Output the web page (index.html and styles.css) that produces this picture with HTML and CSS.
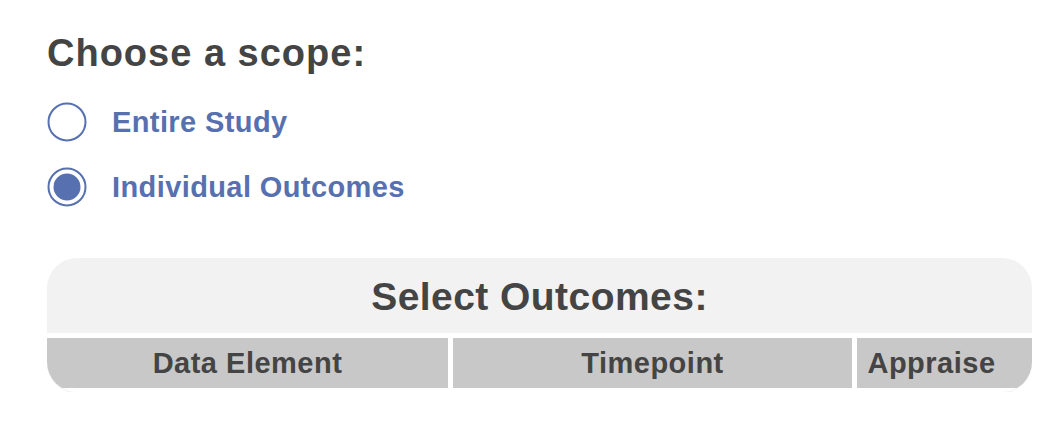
FILE: index.html
```html
<!DOCTYPE html>
<html>
<head>
<meta charset="utf-8">
<link rel="stylesheet" href="styles.css">
</head>
<body>
<div class="page">
  <h1 class="heading">Choose a scope:</h1>
  <div class="options">
    <label class="option">
      <svg class="radio" width="40" height="40" viewBox="0 0 40 40"><circle cx="20" cy="20" r="18.5" fill="#fff" stroke="#5670b0" stroke-width="2"/></svg>
      <span class="option-text">Entire Study</span>
    </label>
    <label class="option">
      <svg class="radio" width="40" height="40" viewBox="0 0 40 40"><circle cx="20" cy="20" r="18.5" fill="#fff" stroke="#5670b0" stroke-width="2"/><circle cx="20" cy="20" r="13.5" fill="#5670b0"/></svg>
      <span class="option-text">Individual Outcomes</span>
    </label>
  </div>
  <div class="card">
    <div class="card-title">Select Outcomes:</div>
    <div class="card-head">
      <div class="head-cell">Data Element</div>
      <div class="head-cell">Timepoint</div>
      <div class="head-cell head-cell-last">Appraise</div>
    </div>
  </div>
</div>
</body>
</html>
```
FILE: styles.css
```css
html, body {
  margin: 0;
  padding: 0;
  background: #fff;
}
body {
  font-family: "Liberation Sans", Arial, sans-serif;
  font-weight: bold;
}
.page {
  padding: 28px 31px 0 47px;
}
.heading {
  margin: 0;
  font-size: 38px;
  letter-spacing: 1px;
  line-height: 50px;
  color: #444;
}
.options {
  display: flex;
  flex-direction: column;
  gap: 25px;
  margin-top: 24px;
}
.option {
  display: flex;
  align-items: center;
  gap: 25px;
  height: 40px;
}
.radio {
  display: block;
  flex: none;
}
.option-text {
  font-size: 29px;
  letter-spacing: 0.4px;
  color: #5670b0;
}
.card {
  margin-top: 51px;
  width: 985px;
  border-radius: 30px;
  overflow: hidden;
  padding-bottom: 4px;
  background: #fff;
  box-shadow: 0 1px 0 #f2f2f2;
}
.card-title {
  background: #f2f2f2;
  height: 75px;
  line-height: 78px;
  text-align: center;
  font-size: 39px;
  letter-spacing: 0.45px;
  color: #444;
}
.card-head {
  display: grid;
  grid-template-columns: 401px 399px 175px;
  gap: 5px;
  margin-top: 5px;
}
.head-cell {
  background: #c8c8c8;
  height: 50px;
  line-height: 50px;
  text-align: center;
  font-size: 29px;
  letter-spacing: 0.5px;
  color: #444;
}
.head-cell-last {
  padding-right: 26px;
}
```
